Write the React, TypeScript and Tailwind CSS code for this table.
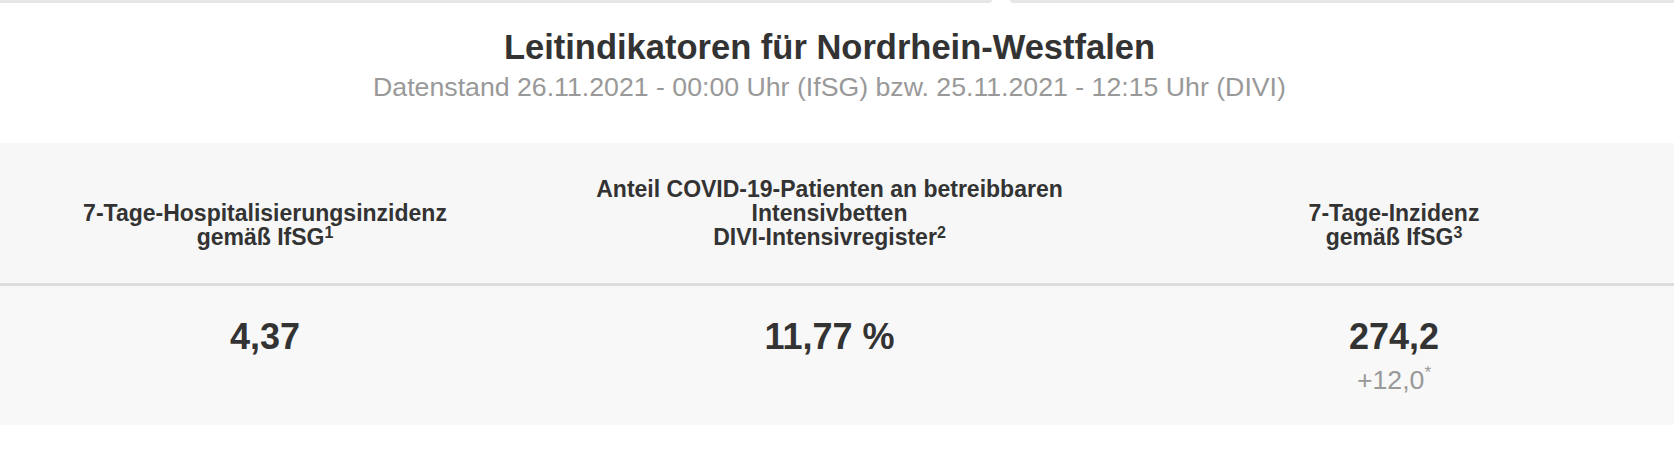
import React from 'react';

const font = { fontFamily: '"Liberation Sans", Arial, Helvetica, sans-serif' };

interface Indicator {
  label: React.ReactNode;
  value: string;
  delta?: string;
}

const Sup: React.FC<{ children: React.ReactNode }> = ({ children }) => (
  <span className="inline-block align-top text-[16px] leading-[16px] font-semibold">{children}</span>
);

const indicators: Indicator[] = [
  {
    label: (
      <>
        7-Tage-Hospitalisierungsinzidenz
        <br />
        gemäß IfSG<Sup>1</Sup>
      </>
    ),
    value: '4,37',
  },
  {
    label: (
      <>
        Anteil COVID-19-Patienten an betreibbaren
        <br />
        Intensivbetten
        <br />
        DIVI-Intensivregister<Sup>2</Sup>
      </>
    ),
    value: '11,77 %',
  },
  {
    label: (
      <>
        7-Tage-Inzidenz
        <br />
        gemäß IfSG<Sup>3</Sup>
      </>
    ),
    value: '274,2',
    delta: '+12,0',
  },
];

const App: React.FC = () => {
  return (
    <div className="w-full min-h-[470px] bg-white overflow-hidden" style={font}>
      {/* tab strip bottom edge */}
      <div className="flex h-[3px] gap-[18px]">
        <div className="w-[992px] bg-[#e6e6e6] rounded-br-[6px]" />
        <div className="flex-1 bg-[#e6e6e6] rounded-bl-[6px]" />
      </div>

      <div className="pr-[15px] pt-[23px] pb-[40px] text-center">
        <h1 className="text-[34.5px] leading-[42px] font-bold text-[#333333]">
          Leitindikatoren für Nordrhein-Westfalen
        </h1>
        <p className="mt-[3px] text-[26.7px] leading-[32px] text-[#999999]">
          Datenstand 26.11.2021 - 00:00 Uhr (IfSG) bzw. 25.11.2021 - 12:15 Uhr (DIVI)
        </p>
      </div>

      <div className="bg-[#f7f7f7]">
        <div className="grid grid-cols-[530px_599px_1fr] pr-[15px] h-[140px] border-b-[3px] border-[#dddddd] box-content">
          {indicators.map((item, i) => (
            <div
              key={i}
              className="flex items-end justify-center pb-[34px] text-center text-[23px] leading-[24px] font-bold text-[#333333]"
            >
              <div>{item.label}</div>
            </div>
          ))}
        </div>

        <div className="grid grid-cols-[530px_599px_1fr] pr-[15px] h-[139px] bg-[#f8f8f8]">
          {indicators.map((item, i) => (
            <div key={i} className="flex flex-col items-center pt-[29px] text-center">
              <div className="text-[36px] leading-[43px] font-bold text-[#333333]">{item.value}</div>
              {item.delta && (
                <div className="mt-[6px] text-[26.7px] leading-[32px] text-[#999999]">
                  {item.delta}
                  <span className="inline-block align-top text-[17px] leading-[17px]">*</span>
                </div>
              )}
            </div>
          ))}
        </div>
      </div>
    </div>
  );
};

export default App;
